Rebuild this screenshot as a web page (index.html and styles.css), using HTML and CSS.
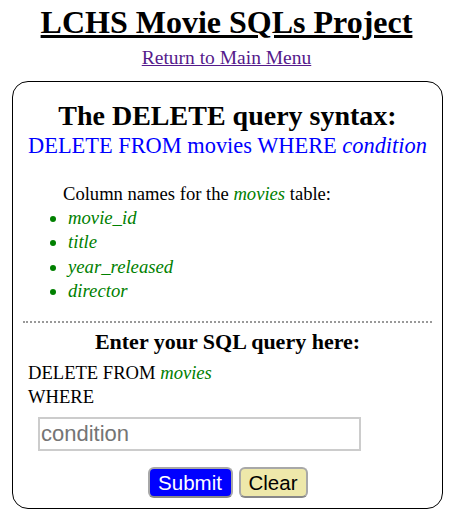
FILE: index.html
```html
<!DOCTYPE html>
<html>
<head>
<meta charset="utf-8">
<link rel="stylesheet" href="styles.css">
</head>
<body>
<h1 class="title">LCHS Movie SQLs Project</h1>
<div class="menu"><a href="#" class="menu-link">Return to Main Menu</a></div>
<div class="box">
  <h2 class="syntax-head">The DELETE query syntax:</h2>
  <p class="syntax">DELETE FROM movies WHERE <i>condition</i></p>
  <p class="cols-intro">Column names for the <i class="green">movies</i> table:</p>
  <ul class="cols">
    <li>movie_id</li>
    <li>title</li>
    <li>year_released</li>
    <li>director</li>
  </ul>
  <div class="divider"></div>
  <h3 class="enter-head">Enter your SQL query here:</h3>
  <div class="query">DELETE FROM <i class="green">movies</i><br>WHERE</div>
  <div class="input-row"><input class="cond" type="text" placeholder="condition"></div>
  <div class="buttons">
    <button class="btn submit">Submit</button>
    <button class="btn clear">Clear</button>
  </div>
</div>
</body>
</html>
```

FILE: styles.css
```css
html, body {
  margin: 0;
  padding: 0;
  background: #fff;
}
body {
  font-family: "Liberation Serif", "Times New Roman", serif;
  color: #000;
}
.title {
  margin: 0;
  padding-top: 4px;
  font-size: 32px;
  line-height: 37px;
  text-align: center;
  text-decoration: underline;
}
.menu {
  text-align: center;
  font-size: 19.5px;
  line-height: 22px;
  margin-top: 6px;
}
.menu-link {
  color: #551a8b;
}
.box {
  margin: 11.6px 10px 0 12px;
  border: 1px solid #000;
  border-radius: 16px;
  padding: 0 0 10px 0;
}
.syntax-head {
  margin: 18.5px 0 0;
  font-size: 28px;
  line-height: 32px;
  text-align: center;
}
.syntax {
  margin: 1px 0 0;
  font-size: 22.4px;
  line-height: 26px;
  color: #00f;
  text-align: center;
}
.cols-intro {
  margin: 23px 0 0 50px;
  font-size: 18.6px;
  line-height: 24px;
}
.green {
  color: #008000;
}
.cols {
  margin: 0;
  padding-left: 55px;
  font-size: 18.7px;
  line-height: 24.3px;
  font-style: italic;
  color: #008000;
}
.divider {
  margin: 17.3px 10px 0 10px;
  border-top: 2px dotted #999;
}
.enter-head {
  margin: 6.6px 0 0;
  font-size: 22px;
  line-height: 26px;
  text-align: center;
}
.query {
  margin: 6px 0 0 15px;
  font-size: 18.6px;
  line-height: 24px;
}
.input-row {
  margin: 8.3px 0 0 25px;
  display: flex;
}
.cond {
  box-sizing: border-box;
  width: 323px;
  height: 34px;
  margin: 0;
  border: 2px solid #ccc;
  padding: 0 1px;
  font-family: "Liberation Sans", Arial, sans-serif;
  font-size: 22px;
  outline: none;
}
.cond::placeholder {
  color: #757575;
}
.buttons {
  margin-top: 16px;
  display: flex;
  justify-content: center;
  gap: 6px;
}
.btn {
  box-sizing: border-box;
  font-family: "Liberation Sans", Arial, sans-serif;
  font-size: 20.5px;
  height: 31px;
  margin: 0;
  padding: 0;
  border: 2px solid #a8a8a8;
  border-bottom-color: #888;
  border-radius: 6px;
}
.submit {
  width: 85px;
  background: #00f;
  color: #fff;
}
.clear {
  width: 69px;
  background: #eee8aa;
  color: #000;
}
```
